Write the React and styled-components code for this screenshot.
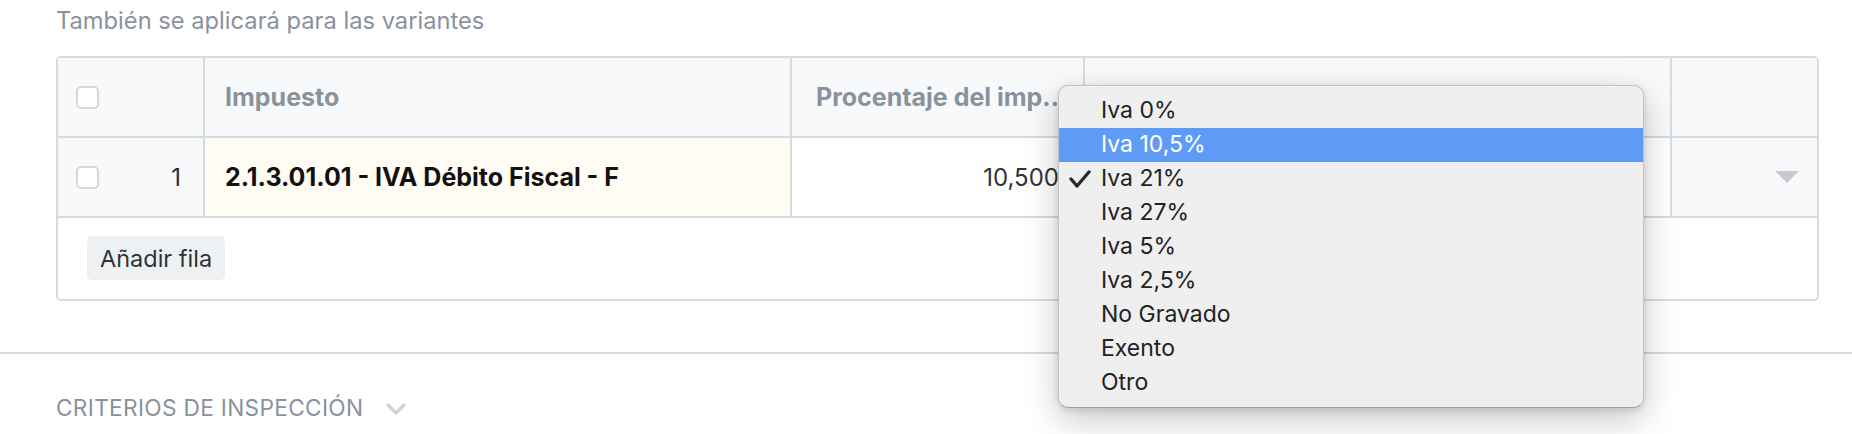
import React from 'react'
import styled, { createGlobalStyle } from 'styled-components'

const GlobalStyle = createGlobalStyle`
    * { box-sizing: border-box; }
    body {
        margin: 0;
        background: #ffffff;
        font-family: Inter, "Liberation Sans", Arial, sans-serif;
    }
`

const Page = styled.div`
    width: 1852px;
    height: 434px;
    overflow: hidden;
`

const Content = styled.div`
    padding: 0 33px 0 56px;
`

const Subtitle = styled.p`
    margin: 0 0 14px;
    height: 42px;
    line-height: 42px;
    font-size: 23.7px;
    color: #8a929c;
`

const Table = styled.div`
    position: relative;
    border: 2px solid #d6dbe0;
    border-radius: 5px;
`

const Row = styled.div`
    display: grid;
    grid-template-columns: 147px 587px 293px 587px 1fr;
    height: 80px;
    border-bottom: 2px solid #d6dbe0;
`

const Cell = styled.div`
    display: flex;
    align-items: center;
    justify-content: ${p => (p.right ? 'flex-end' : 'flex-start')};
    padding: 0 ${p => p.pr || 20}px 0 ${p => p.pl || 20}px;
    border-right: ${p => (p.last ? 'none' : '2px solid #d6dbe0')};
    background: ${p => p.bg || '#ffffff'};
    overflow: hidden;
    min-width: 0;
`

const HeadText = styled.span`
    font-size: 25px;
    font-weight: 700;
    color: #8a929c;
    white-space: nowrap;
    overflow: hidden;
    text-overflow: ellipsis;
`

const Check = styled.span`
    display: inline-block;
    width: 23px;
    height: 23px;
    border: 2px solid #d3d8dd;
    border-radius: 5px;
    background: #ffffff;
    flex-shrink: 0;
`

const IndexNum = styled.span`
    margin-left: auto;
    font-size: 24px;
    color: #2b2f33;
`

const AccountText = styled.span`
    font-size: 25px;
    font-weight: 700;
    color: #111111;
    white-space: nowrap;
`

const Amount = styled.span`
    font-size: 24px;
    color: #333333;
`

const Caret = styled.span`
    width: 0;
    height: 0;
    margin-left: auto;
    border-left: 12px solid transparent;
    border-right: 12px solid transparent;
    border-top: 12px solid #c6c9cd;
`

const Footer = styled.div`
    height: 81px;
    padding: 18px 29px;
`

const AddButton = styled.button`
    height: 44px;
    padding: 0 13px;
    border: none;
    border-radius: 5px;
    background: #eef1f4;
    font-family: inherit;
    font-size: 23.5px;
    color: #2f3337;
    cursor: pointer;
`

const Menu = styled.ul`
    position: absolute;
    left: 1000px;
    top: 27px;
    width: 586px;
    margin: 0;
    padding: 8px 0 7px;
    list-style: none;
    background: #efefef;
    border: 1px solid #c3c3c3;
    border-bottom-color: #9e9e9e;
    border-radius: 10px;
    box-shadow: 0 12px 34px rgba(0, 0, 0, 0.22), 0 2px 6px rgba(0, 0, 0, 0.12);
    z-index: 10;
`

const Option = styled.li`
    position: relative;
    height: 34px;
    line-height: 33px;
    padding-left: 42px;
    font-size: 23px;
    color: ${p => (p.active ? '#ffffff' : '#222222')};
    background: ${p => (p.active ? '#5f9bf6' : 'transparent')};
`

const Tick = styled.svg`
    position: absolute;
    left: 10px;
    top: 7px;
`

const Divider = styled.hr`
    margin: 51px 0 0;
    border: none;
    border-top: 2px solid #d6dbe0;
`

const Section = styled.div`
    display: flex;
    align-items: center;
    gap: 22px;
    padding: 36px 56px 0;
    height: 72px;
    line-height: 36px;
`

const SectionTitle = styled.span`
    font-size: 22.7px;
    letter-spacing: 0.3px;
    color: #8a929c;
`

const options = ['Iva 0%', 'Iva 10,5%', 'Iva 21%', 'Iva 27%', 'Iva 5%', 'Iva 2,5%', 'No Gravado', 'Exento', 'Otro']

export default function App() {
    return (
        <Page>
            <GlobalStyle />
            <Content>
                <Subtitle>También se aplicará para las variantes</Subtitle>
                <Table>
                    <Row>
                        <Cell bg="#f8f9fb" pl={18}><Check /></Cell>
                        <Cell bg="#f8f9fb"><HeadText>Impuesto</HeadText></Cell>
                        <Cell bg="#f8f9fb" pl={24} pr={10}><HeadText>Procentaje del impuesto</HeadText></Cell>
                        <Cell bg="#f8f9fb"><HeadText>Alícuota</HeadText></Cell>
                        <Cell bg="#f8f9fb" last />
                    </Row>
                    <Row>
                        <Cell bg="#f8f9fb" pl={18} pr={22}>
                            <Check />
                            <IndexNum>1</IndexNum>
                        </Cell>
                        <Cell bg="#fffcf4"><AccountText>2.1.3.01.01 - IVA Débito Fiscal - F</AccountText></Cell>
                        <Cell right pr={24}><Amount>10,500</Amount></Cell>
                        <Cell />
                        <Cell bg="#f8f9fb" last pr={18}><Caret /></Cell>
                    </Row>
                    <Footer>
                        <AddButton>Añadir fila</AddButton>
                    </Footer>
                    <Menu>
                        {options.map((o, i) => (
                            <Option key={o} active={i === 1}>
                                {i === 2 && (
                                    <Tick width="22" height="20" viewBox="0 0 22 20">
                                        <polyline points="2,10 8,17 20,3" fill="none" stroke="#2a2a2a" strokeWidth="3.4" strokeLinecap="round" strokeLinejoin="round" />
                                    </Tick>
                                )}
                                {o}
                            </Option>
                        ))}
                    </Menu>
                </Table>
            </Content>
            <Divider />
            <Section>
                <SectionTitle>CRITERIOS DE INSPECCIÓN</SectionTitle>
                <svg width="22" height="13" viewBox="0 0 22 13">
                    <polyline points="2,2 11,11 20,2" fill="none" stroke="#cdd4db" strokeWidth="3.5" />
                </svg>
            </Section>
        </Page>
    )
}
